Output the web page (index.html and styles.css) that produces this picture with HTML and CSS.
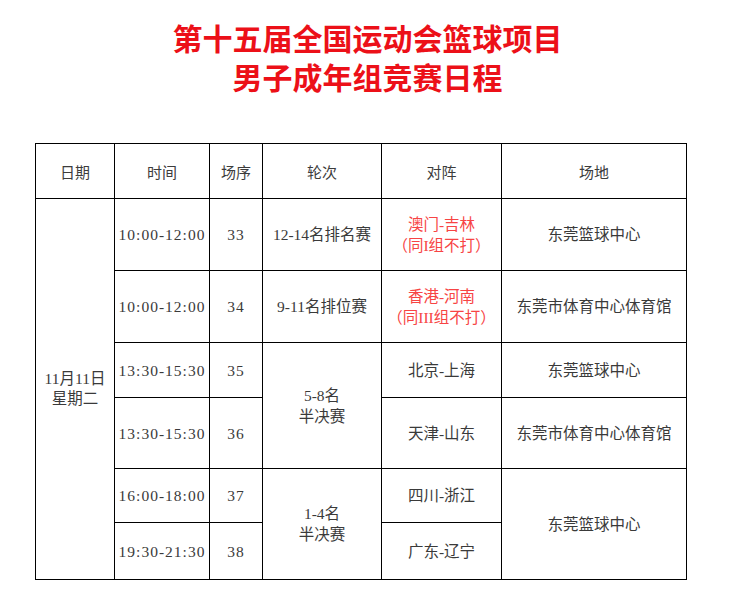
FILE: index.html
```html
<!DOCTYPE html>
<html lang="zh-CN">
<head>
<meta charset="utf-8">
<title>第十五届全国运动会篮球项目男子成年组竞赛日程</title>
<link rel="stylesheet" href="styles.css">
</head>
<body>
<header class="title">
  <h1>第十五届全国运动会篮球项目<br>男子成年组竞赛日程</h1>
</header>
<table class="schedule">
  <colgroup>
    <col class="c-date"><col class="c-time"><col class="c-no"><col class="c-round"><col class="c-match"><col class="c-venue">
  </colgroup>
  <thead>
    <tr class="r-head">
      <th>日期</th><th>时间</th><th>场序</th><th>轮次</th><th>对阵</th><th>场地</th>
    </tr>
  </thead>
  <tbody>
    <tr class="r1">
      <td rowspan="6" class="date">11月11日<br>星期二</td>
      <td class="num">10:00-12:00</td>
      <td class="num">33</td>
      <td>12-14名排名赛</td>
      <td class="red">澳门-吉林<br>（同I组不打）</td>
      <td>东莞篮球中心</td>
    </tr>
    <tr class="r2">
      <td class="num">10:00-12:00</td>
      <td class="num">34</td>
      <td>9-11名排位赛</td>
      <td class="red">香港-河南<br>（同III组不打）</td>
      <td>东莞市体育中心体育馆</td>
    </tr>
    <tr class="r3">
      <td class="num">13:30-15:30</td>
      <td class="num">35</td>
      <td rowspan="2">5-8名<br>半决赛</td>
      <td>北京-上海</td>
      <td>东莞篮球中心</td>
    </tr>
    <tr class="r4">
      <td class="num">13:30-15:30</td>
      <td class="num">36</td>
      <td>天津-山东</td>
      <td>东莞市体育中心体育馆</td>
    </tr>
    <tr class="r5">
      <td class="num">16:00-18:00</td>
      <td class="num">37</td>
      <td rowspan="2">1-4名<br>半决赛</td>
      <td>四川-浙江</td>
      <td rowspan="2">东莞篮球中心</td>
    </tr>
    <tr class="r6">
      <td class="num">19:30-21:30</td>
      <td class="num">38</td>
      <td>广东-辽宁</td>
    </tr>
  </tbody>
</table>
</body>
</html>
```
FILE: styles.css
```css
html, body {
  margin: 0;
  padding: 0;
  background: #ffffff;
}

body {
  font-family: "Liberation Serif", "Noto Sans CJK SC", serif;
  color: #3a3a3a;
}

.title {
  margin: 18px 0 0;
  text-align: center;
}

.title h1 {
  margin: 0;
  font-family: "Noto Sans CJK SC", sans-serif;
  font-weight: 700;
  font-size: 30px;
  line-height: 39px;
  color: #ec1018;
}

.schedule {
  margin: 47px 0 0 35px;
  width: 652px;
  table-layout: fixed;
  border-collapse: collapse;
}

.c-date { width: 79px; }
.c-time { width: 95px; }
.c-no { width: 53px; }
.c-round { width: 119px; }
.c-match { width: 120px; }
.c-venue { width: 185px; }

.schedule th,
.schedule td {
  border: 1px solid #000000;
  padding: 0;
  text-align: center;
  vertical-align: middle;
  font-size: 15.5px;
  line-height: 21px;
  white-space: nowrap;
}

.schedule th {
  font-family: "Noto Sans CJK SC", sans-serif;
  font-weight: 400;
  font-size: 15px;
  color: #3c3c3c;
}

.schedule .num {
  letter-spacing: 1px;
}

.schedule .date {
  line-height: 20px;
}

.schedule .red {
  color: #f74444;
}

.r-head th { height: 54px; }
.r1 td { height: 71px; }
.r2 td { height: 71px; }
.r3 td { height: 54px; }
.r4 td { height: 70px; }
.r5 td { height: 53px; }
.r6 td { height: 56px; }
```
